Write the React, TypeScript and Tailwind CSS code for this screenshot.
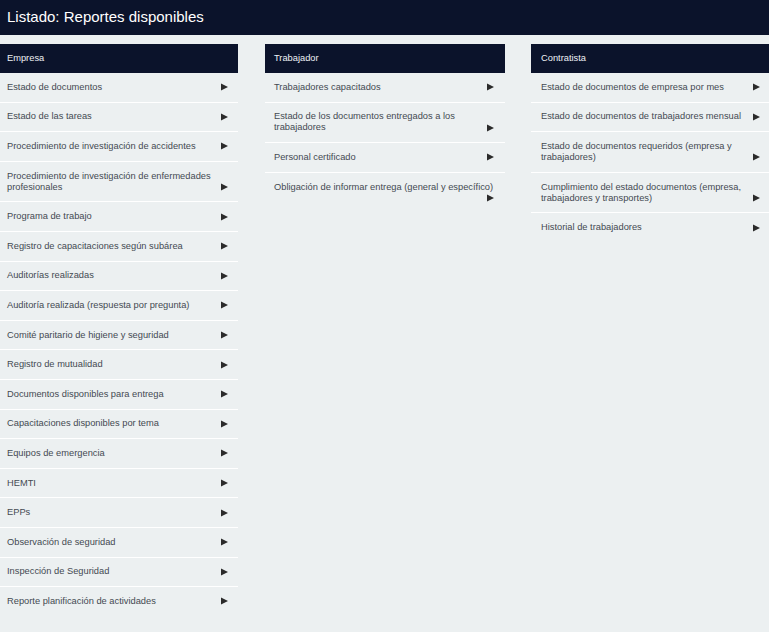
import React from 'react';

type Column = { title: string; items: string[]; width: string; pad: string };

const columns: Column[] = [
  {
    title: 'Empresa',
    width: 'w-[238px] shrink-0',
    pad: 'pl-[7px] pr-[10px]',
    items: [
      'Estado de documentos',
      'Estado de las tareas',
      'Procedimiento de investigación de accidentes',
      'Procedimiento de investigación de enfermedades profesionales',
      'Programa de trabajo',
      'Registro de capacitaciones según subárea',
      'Auditorías realizadas',
      'Auditoría realizada (respuesta por pregunta)',
      'Comité paritario de higiene y seguridad',
      'Registro de mutualidad',
      'Documentos disponibles para entrega',
      'Capacitaciones disponibles por tema',
      'Equipos de emergencia',
      'HEMTI',
      'EPPs',
      'Observación de seguridad',
      'Inspección de Seguridad',
      'Reporte planificación de actividades',
    ],
  },
  {
    title: 'Trabajador',
    width: 'w-[240px] shrink-0',
    pad: 'pl-[9px] pr-[11px]',
    items: [
      'Trabajadores capacitados',
      'Estado de los documentos entregados a los trabajadores',
      'Personal certificado',
      'Obligación de informar entrega (general y específico)',
    ],
  },
  {
    title: 'Contratista',
    width: 'min-w-0 flex-1',
    pad: 'pl-[10px] pr-[9px]',
    items: [
      'Estado de documentos de empresa por mes',
      'Estado de documentos de trabajadores mensual',
      'Estado de documentos requeridos (empresa y trabajadores)',
      'Cumplimiento del estado documentos (empresa, trabajadores y transportes)',
      'Historial de trabajadores',
    ],
  },
];

function Arrow() {
  return (
    <span className="float-right ml-[6px] flex h-[11px] items-center">
      <svg width="7" height="8" viewBox="0 0 7 8">
        <path d="M0 0.5 L7 4 L0 7.5 Z" fill="#2b2b2b" />
      </svg>
    </span>
  );
}

function ReportColumn({ col }: { col: Column }) {
  return (
    <div className={col.width}>
      <div className={`flex h-[29px] items-center bg-[#0b132b] ${col.pad} text-[9.3px] text-[#eef1f5]`}>
        {col.title}
      </div>
      <ul className="divide-y divide-white">
        {col.items.map((it) => (
          <li
            key={it}
            className={`cursor-pointer py-[8.8px] ${col.pad} text-[9.3px] leading-[11px] text-[#444a52]`}
          >
            {it}
            <Arrow />
          </li>
        ))}
      </ul>
    </div>
  );
}

export default function App() {
  return (
    <div
      className="min-h-screen bg-[#ecf0f1]"
      style={{ fontFamily: '"Liberation Sans", Arial, sans-serif' }}
    >
      <div className="flex h-[35px] items-center bg-[#0b132b] px-[7px] text-[15px] text-white">
        Listado: Reportes disponibles
      </div>
      <div className="mt-[9px] flex items-start">
        <ReportColumn col={columns[0]} />
        <div className="w-[27px] shrink-0" />
        <ReportColumn col={columns[1]} />
        <div className="w-[26px] shrink-0" />
        <ReportColumn col={columns[2]} />
      </div>
    </div>
  );
}
